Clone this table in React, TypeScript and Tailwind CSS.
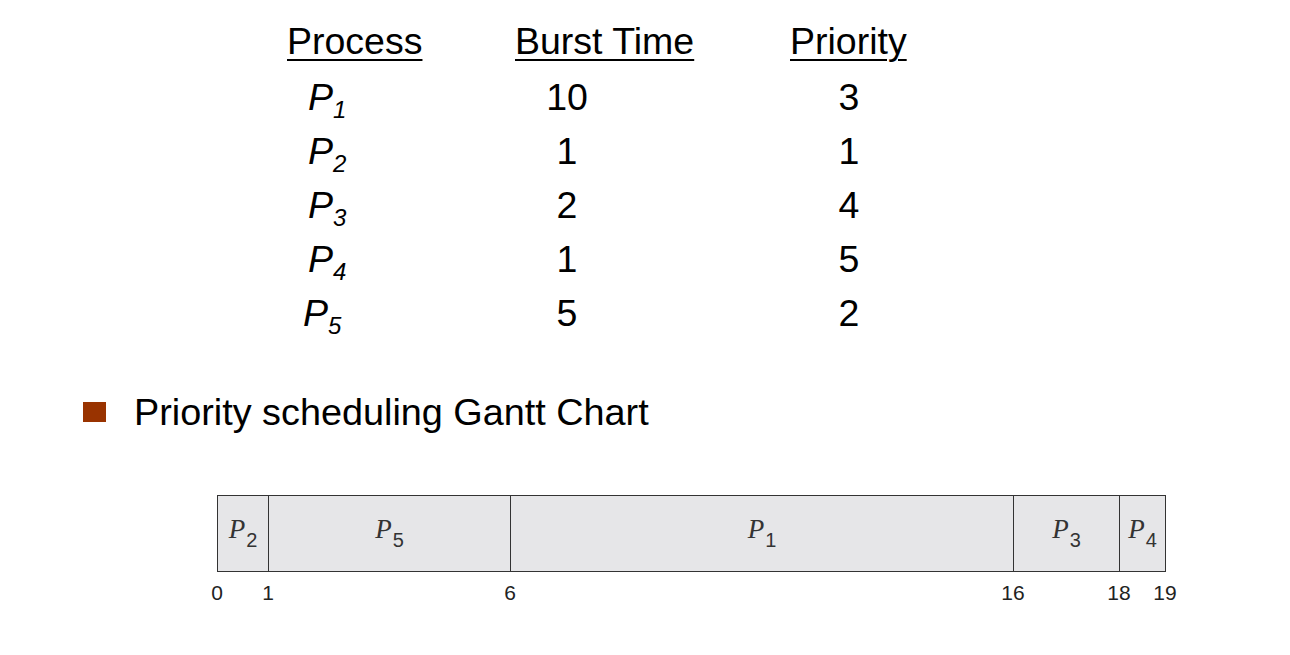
import React from "react";

type Row = { id: number; burst: number; priority: number; indent: string };

const rows: Row[] = [
  { id: 1, burst: 10, priority: 3, indent: "pl-[21px]" },
  { id: 2, burst: 1, priority: 1, indent: "pl-[21px]" },
  { id: 3, burst: 2, priority: 4, indent: "pl-[21px]" },
  { id: 4, burst: 1, priority: 5, indent: "pl-[21px]" },
  { id: 5, burst: 5, priority: 2, indent: "pl-[16px]" },
];

// gantt slots, widths in px taken off the chart
const slots = [
  { id: 2, w: "w-[50px]", first: true },
  { id: 5, w: "w-[242px]" },
  { id: 1, w: "w-[503px]" },
  { id: 3, w: "w-[106px]" },
  { id: 4, w: "w-[46px]" },
];

const ticks = [
  { label: "0", left: "left-[0px]" },
  { label: "1", left: "left-[51px]" },
  { label: "6", left: "left-[293px]" },
  { label: "16", left: "left-[796px]" },
  { label: "18", left: "left-[902px]" },
  { label: "19", left: "left-[948px]" },
];

function ProcName({ id }: { id: number }) {
  return (
    <span className="italic">
      P<span className="relative top-[8px] text-[24px] leading-none">{id}</span>
    </span>
  );
}

function GanttLabel({ id }: { id: number }) {
  return (
    <span className="text-[#333] leading-none">
      <span className="font-['Liberation_Serif',serif] italic text-[27px] leading-none">P</span>
      <span className="relative top-[9px] ml-[1px] text-[20px] leading-none">{id}</span>
    </span>
  );
}

export default function App() {
  return (
    <div className="w-[1290px] h-[655px] bg-white text-black overflow-hidden font-['Liberation_Sans',Arial,sans-serif]">
      {/* Process table */}
      <div className="flex pl-[287px] pt-[14px] text-[37.5px]">
        <div className="w-[228px]">
          <div className="h-[56px] leading-[54px]">
            <span className="underline decoration-[2px] underline-offset-[5px]">Process</span>
          </div>
          {rows.map((r) => (
            <div key={r.id} className={`h-[54px] leading-[54px] ${r.indent}`}>
              <ProcName id={r.id} />
            </div>
          ))}
        </div>
        <div className="w-[275px]">
          <div className="h-[56px] leading-[54px]">
            <span className="underline decoration-[2px] underline-offset-[5px]">Burst Time</span>
          </div>
          {rows.map((r) => (
            <div key={r.id} className="h-[54px] w-[104px] text-center leading-[54px]">
              {r.burst}
            </div>
          ))}
        </div>
        <div>
          <div className="h-[56px] leading-[54px]">
            <span className="underline decoration-[2px] underline-offset-[5px]">Priority</span>
          </div>
          {rows.map((r) => (
            <div key={r.id} className="h-[54px] w-[118px] text-center leading-[54px]">
              {r.priority}
            </div>
          ))}
        </div>
      </div>

      {/* Bullet */}
      <div className="mt-[52px] flex items-center pl-[83px]">
        <div className="w-[23px] h-[20px] bg-[#993300]" />
        <span className="ml-[28px] text-[37.8px] leading-[40px]">Priority scheduling Gantt Chart</span>
      </div>

      {/* Gantt chart */}
      <div className="mt-[63px] ml-[217px] w-[949px]">
        <div className="flex h-[77px] border border-[#333] bg-[#e6e6e8]">
          {slots.map((s) => (
            <div
              key={s.id}
              className={`${s.w} flex items-center justify-center pb-[8px] ${s.first ? "" : "border-l border-[#333]"}`}
            >
              <GanttLabel id={s.id} />
            </div>
          ))}
        </div>
        <div className="relative mt-[11px] h-[22px] text-[21px] leading-[20px] text-[#222]">
          {ticks.map((t) => (
            <span key={t.label} className={`absolute top-0 ${t.left} -translate-x-1/2`}>
              {t.label}
            </span>
          ))}
        </div>
      </div>
    </div>
  );
}
